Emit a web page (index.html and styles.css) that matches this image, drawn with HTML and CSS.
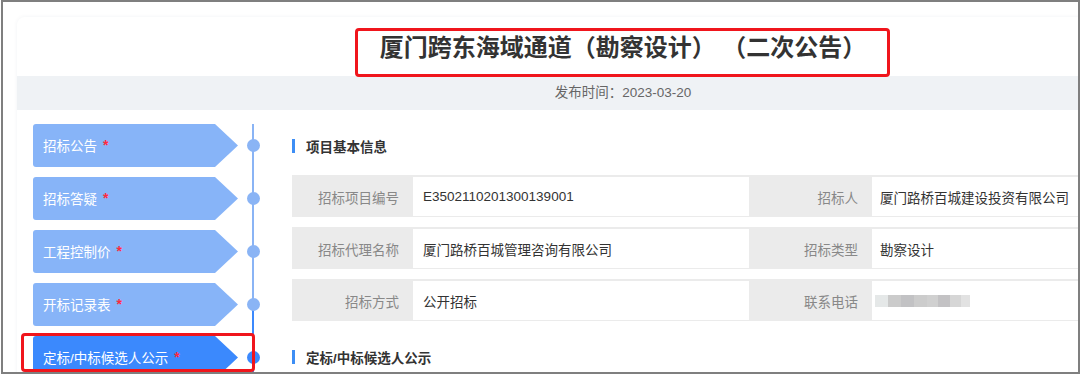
FILE: index.html
```html
<!DOCTYPE html>
<html lang="zh-CN">
<head>
  <meta charset="UTF-8">
  <meta name="viewport" content="width=device-width, initial-scale=1.0">
  <title>厦门跨东海域通道（勘察设计）（二次公告）</title>
  <link rel="stylesheet" href="styles.css">
</head>
<body>
  <div class="frame">
    <div class="card">
      <div class="card-head">
        <h1 class="title">厦门跨东海域通道（勘察设计） （二次公告）</h1>
      </div>
      <div class="pub-bar">发布时间：2023-03-20</div>

      <div class="card-body">
        <ul class="steps">
          <li class="step">
            <a class="tab">招标公告<span class="star">*</span></a>
            <span class="node"><i class="dot"></i></span>
          </li>
          <li class="step">
            <a class="tab">招标答疑<span class="star">*</span></a>
            <span class="node"><i class="dot"></i></span>
          </li>
          <li class="step">
            <a class="tab">工程控制价<span class="star">*</span></a>
            <span class="node"><i class="dot"></i></span>
          </li>
          <li class="step before-active">
            <a class="tab">开标记录表<span class="star">*</span></a>
            <span class="node"><i class="dot"></i></span>
          </li>
          <li class="step active">
            <a class="tab">定标/中标候选人公示<span class="star">*</span></a>
            <span class="node"><i class="dot"></i></span>
          </li>
        </ul>

        <div class="content">
          <h2 class="sec-title">项目基本信息</h2>

          <div class="info-row">
            <div class="label">招标项目编号</div>
            <div class="value">E3502110201300139001</div>
            <div class="label label-2">招标人</div>
            <div class="value value-2">厦门路桥百城建设投资有限公司</div>
          </div>
          <div class="info-row">
            <div class="label">招标代理名称</div>
            <div class="value">厦门路桥百城管理咨询有限公司</div>
            <div class="label label-2">招标类型</div>
            <div class="value value-2">勘察设计</div>
          </div>
          <div class="info-row">
            <div class="label">招标方式</div>
            <div class="value">公开招标</div>
            <div class="label label-2">联系电话</div>
            <div class="value value-2"><span class="blurred"></span></div>
          </div>

          <h2 class="sec-title sec-next">定标/中标候选人公示</h2>
        </div>
      </div>
    </div>

    <div class="mark mark-title"></div>
    <div class="mark mark-tab"></div>
  </div>
</body>
</html>
```

FILE: styles.css
```css
html, body {
  margin: 0;
  padding: 0;
  background: #fff;
  overflow: hidden;
}
body {
  font-family: 'Liberation Sans', 'Noto Sans CJK SC', sans-serif;
  font-size: 13.5px;
  color: #333;
}
.frame {
  position: relative;
  margin-left: 1px;
  width: 1079px;
  height: 374px;
  border: 2px solid #7f7f7f;
  box-sizing: border-box;
  overflow: hidden;
  padding: 15px 0 0 14px;
}
.card {
  width: 1212px;
  background: #fff;
  border-radius: 8px 8px 0 0;
  box-shadow: 0 0 4px rgba(40,50,90,0.06);
}
.card-head {
  height: 59px;
  display: flex;
  align-items: center;
  justify-content: center;
}
.title {
  margin: 0;
  font-size: 24px;
  font-weight: bold;
  color: #333;
  line-height: 1;
  padding-top: 2px;
}
.pub-bar {
  height: 34px;
  line-height: 34px;
  background: #eff2f5;
  text-align: center;
  color: #666;
  font-size: 13.5px;
}
.card-body {
  display: flex;
  padding: 14px 0 0 16px;
}

/* left steps */
.steps {
  list-style: none;
  margin: 0;
  padding: 0;
  width: 235px;
  flex-shrink: 0;
}
.step {
  display: flex;
  height: 53px;
}
.tab {
  display: flex;
  align-items: center;
  width: 205px;
  height: 43px;
  padding: 0 0 2px 10px;
  box-sizing: border-box;
  background: #87b4f8;
  color: #fff;
  border-radius: 3px;
  clip-path: polygon(0 0, 182px 0, 100% 50%, 182px 100%, 0 100%);
  cursor: pointer;
}
.star {
  color: #ff2a3f;
  font-size: 14px;
  font-weight: bold;
  margin-left: 6px;
}
.node {
  width: 30px;
  display: flex;
  justify-content: center;
  background: linear-gradient(#8ab4f5, #8ab4f5) center / 2px 100% no-repeat;
}
.dot {
  width: 13px;
  height: 13px;
  margin-top: 15px;
  border-radius: 50%;
  background: #8ab4f5;
}
.before-active .node {
  background: linear-gradient(#8ab4f5 0 21px, #3b89fd 21px) center / 2px 100% no-repeat;
}
.active .tab {
  background: #3b89fd;
}
.active .node {
  background: linear-gradient(#3b89fd, #3b89fd) center / 2px 100% no-repeat;
}
.active .dot {
  background: #3b89fd;
}

/* right content */
.content {
  flex: 1;
  padding-left: 24px;
}
.sec-title {
  margin: 0 0 8px;
  height: 43px;
  display: flex;
  align-items: center;
  font-size: 13.5px;
  font-weight: bold;
  color: #333;
}
.sec-title::before {
  content: "";
  width: 3px;
  height: 14px;
  margin-right: 11px;
  background: #3d8ef5;
}
.sec-next {
  margin-top: 14px;
}
.info-row {
  display: grid;
  grid-template-columns: 121px 336px 123px 1fr;
  height: 42px;
  padding: 2px 0 1px;
  box-sizing: border-box;
  background: #ebebeb;
  margin-bottom: 10px;
}
.label {
  display: flex;
  align-items: center;
  justify-content: flex-end;
  padding-right: 14px;
  color: #888;
}
.value {
  display: flex;
  align-items: center;
  padding-left: 10px;
  background: #fff;
  color: #333;
}
.value-2 {
  padding-left: 8px;
}
.blurred {
  width: 95px;
  height: 12px;
  margin-left: -5px;
  background: linear-gradient(to right,
    #e5e8e8 0 13px, #cbcbcb 13px 26px, #c2c2c4 26px 39px, #cccccc 39px 52px,
    #d0d0d0 52px 63px, #c3c2c4 63px 75px, #d6d6d6 75px 86px, #e2e2e2 86px 95px);
  filter: blur(0.6px);
}

/* annotation boxes */
.mark {
  position: absolute;
  border: 3px solid #f0151c;
  border-radius: 4px;
  box-sizing: border-box;
}
.mark-title {
  left: 352px;
  top: 26px;
  width: 535px;
  height: 49px;
}
.mark-tab {
  left: 18px;
  top: 331px;
  width: 234px;
  height: 39px;
}
```
